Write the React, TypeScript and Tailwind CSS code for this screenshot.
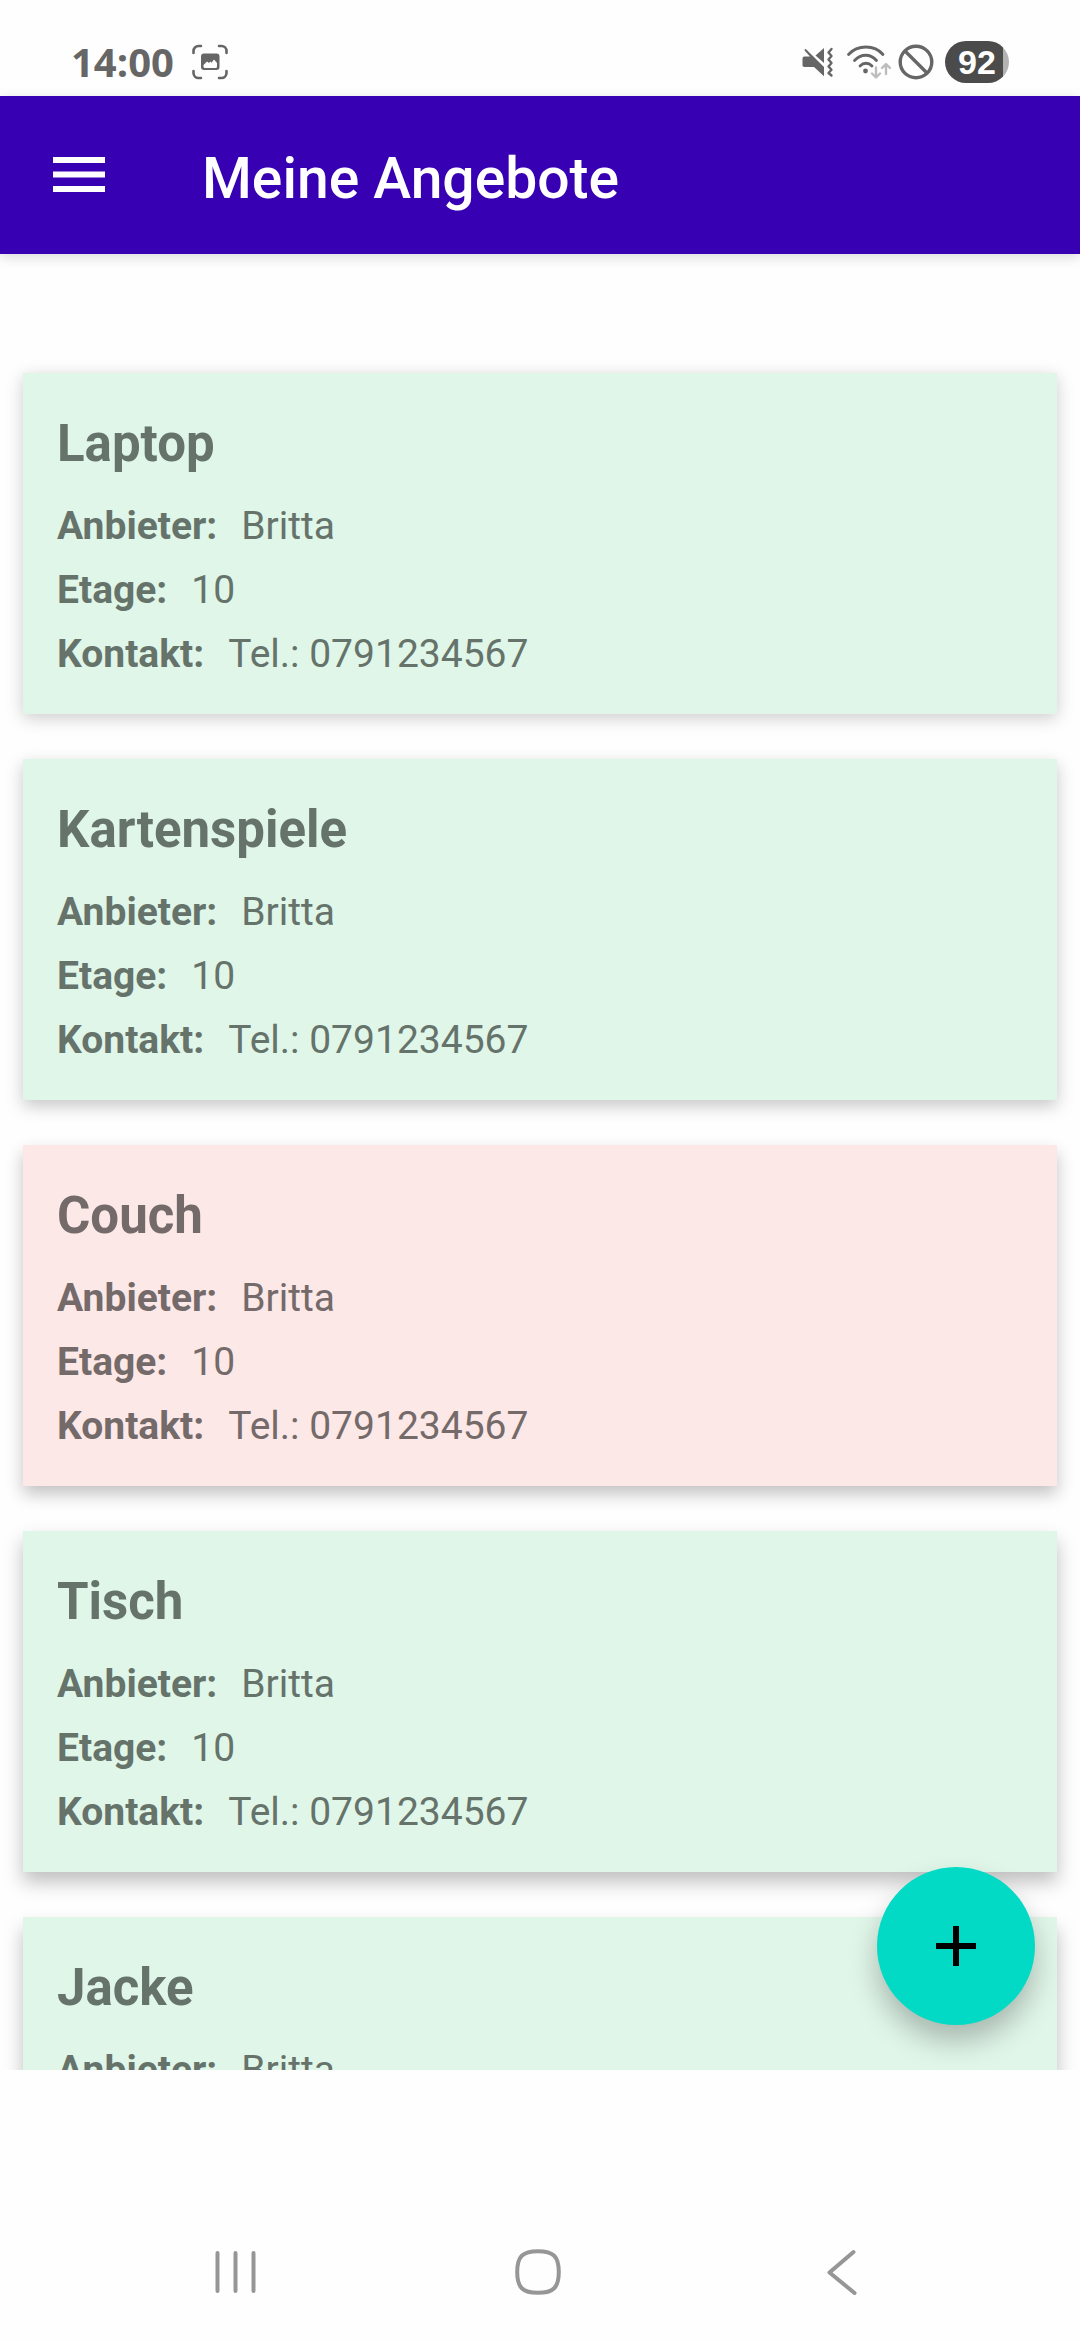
import React from "react";

type Offer = {
  title: string;
  provider: string;
  floor: string;
  contact: string;
  tone: string;
  shadow: string;
};

const AVAILABLE = "bg-[#e0f6e9] text-[#65736b]";
const TAKEN = "bg-[#fce8e7] text-[#746a6a]";

const shared = { provider: "Britta", floor: "10", contact: "Tel.: 0791234567" };

const offers: Offer[] = [
  { title: "Laptop", ...shared, tone: AVAILABLE, shadow: "shadow-[0_4px_16px_rgba(0,0,0,0.2)]" },
  { title: "Kartenspiele", ...shared, tone: AVAILABLE, shadow: "shadow-[0_6px_16px_rgba(0,0,0,0.22)]" },
  { title: "Couch", ...shared, tone: TAKEN, shadow: "shadow-[0_8px_16px_rgba(0,0,0,0.24)]" },
  { title: "Tisch", ...shared, tone: AVAILABLE, shadow: "shadow-[0_10px_18px_rgba(0,0,0,0.25)]" },
  { title: "Jacke", ...shared, tone: AVAILABLE, shadow: "shadow-[0_12px_18px_rgba(0,0,0,0.25)]" },
];

function CaptureIcon() {
  return (
    <svg width="36" height="36" viewBox="0 0 36 36" fill="none" aria-hidden="true">
      <path
        d="M1.5 9V7a5 5 0 0 1 5-5H9M27 2h2.500a5 5 0 0 1 5 5v2M34.500 27v2a5 5 0 0 1-5 5H27M9 34H6.500a5 5 0 0 1-5-5v-2"
        stroke="#666"
        strokeWidth="2.600"
        strokeLinecap="round"
      />
      <path
        fillRule="evenodd"
        fill="#666"
        d="M12 9.500h12.500a3 3 0 0 1 3 3V23a3 3 0 0 1-3 3H12a3 3 0 0 1-3-3V12.500a3 3 0 0 1 3-3ZM11.500 21v1.800c0 .700.500 1.200 1.200 1.200h11.100c.700 0 1.200-.500 1.200-1.200V19l-3-3.500-2.500 3.300-1.300-1.300L17 19l-2-1.500Z"
      />
    </svg>
  );
}

function MuteIcon() {
  return (
    <svg width="32" height="32" viewBox="0 0 32 32" aria-hidden="true">
      <path fill="#666" d="M2.500 10.500H8L2.800 4.800a1 1 0 0 1 1.500-1.400L22 21v9.200L12 21H2.500C1 21 .500 20 .500 19v-6.500c0-1.200.800-2 2-2ZM13.500 9.500 22 2v15Z" />
      <path
        d="M29.500 3 26.500 6.500l3 3.500-3 3.500 3 3.500-3 3.500 3 3.200-3 3.300 3 2.500"
        fill="none"
        stroke="#666"
        strokeWidth="2.400"
        strokeLinecap="round"
        strokeLinejoin="round"
      />
    </svg>
  );
}

function WifiIcon() {
  return (
    <svg width="46" height="36" viewBox="0 0 46 36" fill="none" strokeLinecap="round" aria-hidden="true">
      <g stroke="#666" strokeWidth="2.800">
        <path d="M2.500 10.500c9-10 26-10 34.500 0" />
        <path d="M8.500 16.500c6.500-7 16-7 22 0" />
        <path d="M14 22c3.500-3.700 8.500-3.700 12 0" />
      </g>
      <circle cx="19.500" cy="27" r="2.400" fill="#666" />
      <g stroke="#bdbdbd" strokeWidth="2.400" strokeLinejoin="round">
        <path d="M30 23.500V33M26 29.500l4 4 4-4" />
        <path d="M40 30V20.500M36 24l4-4 4 4" />
      </g>
    </svg>
  );
}

function BlockedIcon() {
  return (
    <svg width="36" height="36" viewBox="0 0 36 36" fill="none" stroke="#666" strokeWidth="3.400" aria-hidden="true">
      <circle cx="18" cy="18" r="15.800" />
      <path d="m7 7 22 22" />
    </svg>
  );
}

function StatusBar() {
  return (
    <div className="flex h-24 shrink-0 items-center justify-between pt-7 pr-[71px] pl-[71px]">
      <div className="flex items-center gap-[18px]">
        <span className="font-['Open_Sans',sans-serif] text-[40px] leading-10 font-bold text-[#666]">14:00</span>
        <CaptureIcon />
      </div>
      <div className="flex items-center">
        <MuteIcon />
        <div className="ml-3 flex">
          <WifiIcon />
        </div>
        <div className="ml-1.5 flex">
          <BlockedIcon />
        </div>
        <div className="ml-[11px] flex h-[42px] w-16 items-center justify-center rounded-full bg-[linear-gradient(to_right,#4b4b4b_91%,#b3b3b3_91%)] font-['Liberation_Sans',sans-serif] text-[34px] leading-none font-bold text-white">
          92
        </div>
      </div>
    </div>
  );
}

function AppBar() {
  return (
    <header className="flex h-[158px] shrink-0 items-center bg-[#3700b3] pl-[53px] text-white shadow-[0_3px_12px_rgba(0,0,0,0.15)]">
      <button type="button" aria-label="Menü öffnen" className="flex">
        <svg width="52" height="36" viewBox="0 0 52 36" fill="currentColor" aria-hidden="true">
          <path d="M0 0h52v6H0zM0 14.500h52v6H0zM0 29h52v6H0z" />
        </svg>
      </button>
      <h1 className="ml-[97px] pt-2 text-[57px] leading-[68px] font-medium">Meine Angebote</h1>
    </header>
  );
}

function Detail({ label, value }: { label: string; value: string }) {
  return (
    <div className="flex gap-6">
      <dt className="font-bold">{label}</dt>
      <dd>{value}</dd>
    </div>
  );
}

function OfferCard({ offer }: { offer: Offer }) {
  return (
    <li className={`px-[34px] pt-[41px] pb-7 ${offer.tone} ${offer.shadow}`}>
      <h2 className="text-[51px] leading-[60px] font-bold">{offer.title}</h2>
      <dl className="mt-5 text-[39px] leading-[64px]">
        <Detail label="Anbieter:" value={offer.provider} />
        <Detail label="Etage:" value={offer.floor} />
        <Detail label="Kontakt:" value={offer.contact} />
      </dl>
    </li>
  );
}

function NavigationBar() {
  return (
    <nav className="mt-[133px] grid h-[137px] shrink-0 grid-cols-3 items-center justify-items-center pr-[88px] pl-[84px] text-[#969696]">
      <button type="button" aria-label="Letzte Apps" className="flex">
        <svg width="48" height="48" viewBox="0 0 48 48" fill="none" stroke="currentColor" strokeWidth="4" strokeLinecap="round" aria-hidden="true">
          <path d="M6.500 5v38M24.500 5v38M42.500 5v38" />
        </svg>
      </button>
      <button type="button" aria-label="Startbildschirm" className="flex">
        <svg width="48" height="48" viewBox="0 0 48 48" fill="none" stroke="currentColor" strokeWidth="4" aria-hidden="true">
          <path d="M24 3.200c15.500 0 20.800 5.300 20.800 20.800S39.500 44.800 24 44.800 3.200 39.500 3.200 24 8.500 3.200 24 3.200Z" />
        </svg>
      </button>
      <button type="button" aria-label="Zurück" className="flex">
        <svg width="48" height="48" viewBox="0 0 48 48" fill="none" stroke="currentColor" strokeWidth="4" strokeLinecap="round" strokeLinejoin="round" aria-hidden="true">
          <path d="M36.500 4 12.500 24.500l25 20.500" />
        </svg>
      </button>
    </nav>
  );
}

export default function App() {
  return (
    <div className="flex h-screen flex-col bg-[#fefefe] font-[Roboto,sans-serif]">
      <StatusBar />
      <AppBar />
      <main className="relative min-h-0 flex-1">
        <ul className="flex h-full flex-col gap-[45px] overflow-y-auto px-[23px] pt-[119px] [scrollbar-width:none] *:shrink-0">
          {offers.map((offer) => (
            <OfferCard key={offer.title} offer={offer} />
          ))}
        </ul>
        <button
          type="button"
          aria-label="Angebot hinzufügen"
          className="absolute right-[45px] bottom-[45px] flex size-[158px] items-center justify-center rounded-full bg-[#03dac5] text-black shadow-[0_16px_28px_rgba(0,0,0,0.25)]"
        >
          <svg width="40" height="40" viewBox="0 0 40 40" fill="currentColor" aria-hidden="true">
            <path d="M17 0h6v17h17v6H23v17h-6V23H0v-6h17z" />
          </svg>
        </button>
      </main>
      <NavigationBar />
    </div>
  );
}
